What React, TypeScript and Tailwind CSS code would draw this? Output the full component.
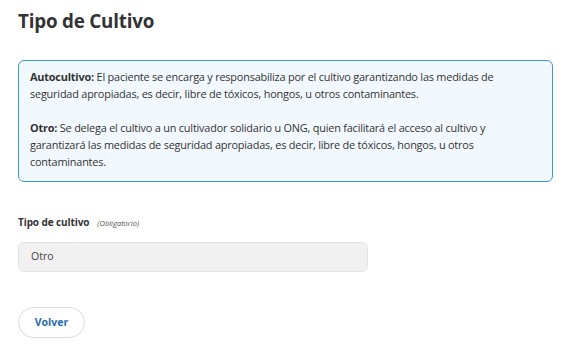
import React from 'react';

const font = { fontFamily: '"Open Sans", "Noto Sans", sans-serif' };

export default function App() {
  return (
    <div className="w-[570px] h-[350px] bg-white text-[#333]" style={font}>
      <div className="px-[18px] pt-[8px]">
        <h1 className="text-[18.8px] font-bold text-[#333] tracking-[-0.2px] leading-[26px]">Tipo de Cultivo</h1>

        {/* Info box */}
        <div className="mt-[26px] w-[535px] rounded-[6px] border-[1.5px] border-[#3b97d9] bg-[#f2f9fe] px-[11px] pt-[7px] pb-[11px] text-[10.9px] leading-[17px] tracking-[-0.2px] text-[#333]">
          <p>
            <span className="font-bold">Autocultivo:</span> El paciente se encarga y responsabiliza por el cultivo garantizando las medidas de
            <br />
            seguridad apropiadas, es decir, libre de tóxicos, hongos, u otros contaminantes.
          </p>
          <p className="mt-[17px]">
            <span className="font-bold">Otro:</span> Se delega el cultivo a un cultivador solidario u ONG, quien facilitará el acceso al cultivo y
            <br />
            garantizará las medidas de seguridad apropiadas, es decir, libre de tóxicos, hongos, u otros
            <br />
            contaminantes.
          </p>
        </div>

        {/* Field */}
        <div className="mt-[33px] flex items-baseline gap-[8px]">
          <span className="text-[10px] font-bold text-[#333] tracking-[-0.1px]">Tipo de cultivo</span>
          <span className="text-[7.5px] italic text-[#555]">(Obligatorio)</span>
        </div>
        <div className="mt-[12px] w-[350px] h-[30px] rounded-[6px] border border-[#e3e3e3] bg-[#f1f1f1] flex items-center px-[12px] text-[10.5px] text-[#444]">
          Otro
        </div>

        <button className="mt-[35px] w-[67px] h-[31px] rounded-full border border-[#dcdcdc] bg-white text-[10.5px] font-bold text-[#2a6db3] flex items-center justify-center">
          Volver
        </button>
      </div>
    </div>
  );
}
